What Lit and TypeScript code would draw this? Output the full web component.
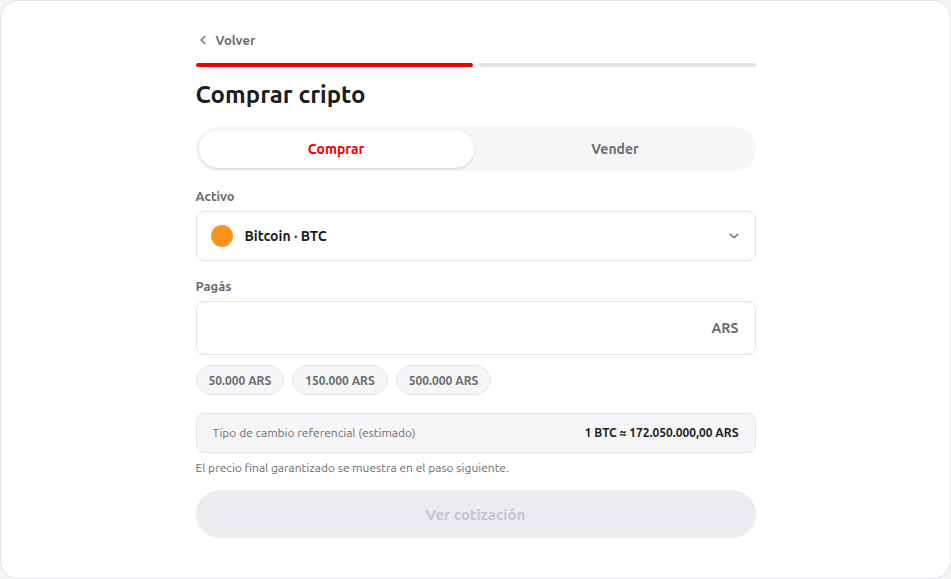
import { LitElement, html, css } from "lit";
import { customElement, state } from "lit/decorators.js";

const PRESETS = ["50.000", "150.000", "500.000"];

@customElement("app-root")
export class AppRoot extends LitElement {
  @state() private mode: "buy" | "sell" = "buy";
  @state() private amount = "";

  static styles = css`
    :host {
      --ink: #1d1d1d;
      --muted: #6c6c6e;
      --line: #e4e4e9;
      --soft: #f6f6f9;
      --brand: #eb0000;
      display: block;
      background: #f4f4f7;
      color: var(--ink);
      font-family: Ubuntu, "Noto Sans", sans-serif;
      font-size: 13px;
      line-height: 20px;
    }
    * {
      box-sizing: border-box;
    }
    button,
    input,
    select {
      font: inherit;
      color: inherit;
      margin: 0;
      padding: 0;
      border: 0;
      background: none;
      outline: none;
    }
    button {
      cursor: pointer;
    }
    .card {
      min-height: 100vh;
      padding: 29px 24px 40px;
      background: #fff;
      border: 1px solid var(--line);
      border-radius: 18px;
    }
    .flow {
      display: flex;
      flex-direction: column;
      max-width: 560px;
      margin: 0 auto;
    }
    .back {
      display: flex;
      align-items: center;
      align-self: flex-start;
      gap: 6px;
      color: var(--muted);
      font-weight: 700;
    }
    .icon {
      width: 14px;
      height: 14px;
      fill: none;
      stroke: var(--muted);
      stroke-width: 1.4;
      stroke-linecap: round;
      stroke-linejoin: round;
      flex: none;
    }
    .steps {
      display: grid;
      grid-template-columns: 1fr 1fr;
      gap: 6px;
      margin-top: 13px;
    }
    .step {
      height: 4px;
      border-radius: 2px;
      background: var(--line);
    }
    .step.done {
      background: var(--brand);
    }
    h1 {
      margin: 12px 0 16px;
      font-size: 24px;
      line-height: 32px;
      font-weight: 700;
    }
    .tabs {
      display: grid;
      grid-template-columns: 1fr 1fr;
      gap: 4px;
      padding: 3px;
      border-radius: 22px;
      background: var(--soft);
    }
    .tab {
      height: 38px;
      border-radius: 19px;
      color: var(--muted);
      font-size: 14px;
      font-weight: 700;
    }
    .tab.active {
      background: #fff;
      color: var(--brand);
      box-shadow: 0 1px 3px rgba(0, 0, 0, 0.14);
    }
    .label {
      margin: 15px 0 5px;
      color: var(--muted);
      font-weight: 700;
    }
    .field {
      display: flex;
      align-items: center;
      height: 50px;
      padding: 0 14px;
      border: 1px solid var(--line);
      border-radius: 8px;
      font-size: 14px;
      font-weight: 700;
    }
    .coin {
      width: 22px;
      height: 22px;
      margin-right: 12px;
      border-radius: 50%;
      background: #f7931a;
      flex: none;
    }
    .asset {
      flex: 1;
      min-width: 0;
      appearance: none;
    }
    .amount {
      height: 54px;
      padding: 0 16px;
    }
    .amount input {
      flex: 1;
      min-width: 0;
      font-size: 20px;
    }
    .unit {
      color: var(--muted);
    }
    .chips {
      display: flex;
      flex-wrap: wrap;
      gap: 8px;
      margin: 10px 0 18px;
    }
    .chip {
      height: 30px;
      padding: 2px 12px 0;
      border: 1px solid var(--line);
      border-radius: 15px;
      background: var(--soft);
      color: var(--muted);
      font-size: 12px;
      font-weight: 700;
    }
    .rate {
      display: flex;
      justify-content: space-between;
      align-items: center;
      min-height: 40px;
      padding: 0 16px;
      border: 1px solid var(--line);
      border-radius: 8px;
      background: var(--soft);
      font-size: 12px;
    }
    .rate span,
    .note {
      color: var(--muted);
    }
    .rate strong {
      font-weight: 700;
    }
    .note {
      margin: 5px 0 12px;
      font-size: 12px;
    }
    .submit {
      height: 48px;
      padding: 2px 16px 0;
      border-radius: 24px;
      background: var(--brand);
      color: #fff;
      font-size: 15px;
      font-weight: 700;
    }
    .submit:disabled {
      background: #ebebf0;
      color: #c4c6cc;
      cursor: default;
    }
  `;

  private tab(mode: "buy" | "sell", text: string) {
    const active = this.mode === mode;
    return html`<button
      type="button"
      role="tab"
      aria-selected=${active ? "true" : "false"}
      class="tab ${active ? "active" : ""}"
      @click=${() => (this.mode = mode)}
    >${text}</button>`;
  }

  render() {
    return html`
      <main class="card">
        <form class="flow" @submit=${(e: Event) => e.preventDefault()}>
          <button type="button" class="back">
            <svg class="icon" viewBox="0 0 14 14" aria-hidden="true">
              <path d="M8.8 3.6 5.2 7l3.6 3.4" />
            </svg>
            Volver
          </button>
          <div class="steps" aria-hidden="true">
            <div class="step done"></div>
            <div class="step"></div>
          </div>
          <h1>Comprar cripto</h1>
          <div class="tabs" role="tablist">
            ${this.tab("buy", "Comprar")} ${this.tab("sell", "Vender")}
          </div>
          <label class="label" for="asset">Activo</label>
          <div class="field">
            <span class="coin"></span>
            <select class="asset" id="asset">
              <option>Bitcoin · BTC</option>
            </select>
            <svg class="icon" viewBox="0 0 14 14" aria-hidden="true">
              <path d="M3.2 5.2 7 8.8l3.8-3.6" />
            </svg>
          </div>
          <label class="label" for="amount">Pagás</label>
          <div class="field amount">
            <input
              id="amount"
              inputmode="decimal"
              autocomplete="off"
              .value=${this.amount}
              @input=${(e: Event) =>
                (this.amount = (e.target as HTMLInputElement).value)}
            />
            <span class="unit">ARS</span>
          </div>
          <div class="chips">
            ${PRESETS.map(
              (p) => html`<button
                type="button"
                class="chip"
                @click=${() => (this.amount = p)}
              >${p} ARS</button>`
            )}
          </div>
          <div class="rate">
            <span>Tipo de cambio referencial (estimado)</span>
            <strong>1 BTC ≈ 172.050.000,00 ARS</strong>
          </div>
          <p class="note">El precio final garantizado se muestra en el paso siguiente.</p>
          <button class="submit" ?disabled=${!this.amount}>Ver cotización</button>
        </form>
      </main>
    `;
  }
}
